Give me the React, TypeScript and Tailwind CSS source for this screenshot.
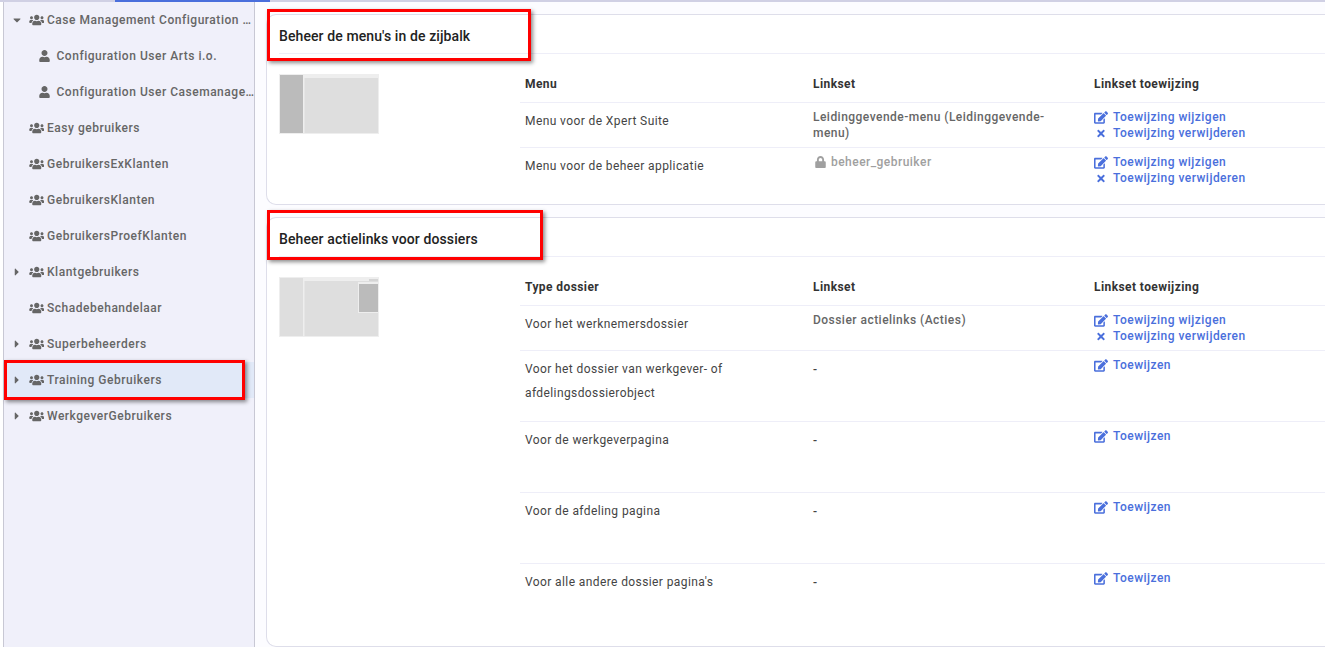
import React from "react";
import { FaUsers, FaUser, FaLock, FaEdit, FaTimes, FaCaretDown, FaCaretRight } from "react-icons/fa";

const font = { fontFamily: "Roboto, 'Liberation Sans', sans-serif" };

function Mark({ className }: { className: string }) {
  return <div className={"absolute border-[3px] border-[#ff0000] shadow-[2px_2px_4px_rgba(0,0,0,0.45)] pointer-events-none z-10 " + className} />;
}

type TreeItem = { label: string; caret?: "down" | "right"; child?: boolean; selected?: boolean };
const tree: TreeItem[] = [
  { label: "Case Management Configuration …", caret: "down" },
  { label: "Configuration User Arts i.o.", child: true },
  { label: "Configuration User Casemanage…", child: true },
  { label: "Easy gebruikers" },
  { label: "GebruikersExKlanten" },
  { label: "GebruikersKlanten" },
  { label: "GebruikersProefKlanten" },
  { label: "Klantgebruikers", caret: "right" },
  { label: "Schadebehandelaar" },
  { label: "Superbeheerders", caret: "right" },
  { label: "Training Gebruikers", caret: "right", selected: true },
  { label: "WerkgeverGebruikers", caret: "right" },
];

function TreeRow({ item }: { item: TreeItem }) {
  return (
    <div className={"relative flex items-center h-9 text-[12px] font-medium tracking-[0.52px] text-[#666] whitespace-nowrap " + (item.selected ? "bg-[#e1e9f8] border-l border-[#4a6fdc]" : "")}>
      {item.selected && <Mark className="left-[-1px] top-[-2px] w-[241px] h-[40px]" />}
      {item.child ? (
        <>
          <span className="w-[35px] shrink-0" />
          <FaUser className="w-[11px] h-[12px] text-[#666] shrink-0" />
          <span className="ml-[6.5px]">{item.label}</span>
        </>
      ) : (
        <>
          <span className={"w-[24.5px] shrink-0 flex justify-center text-[#666] " + (item.selected ? "-ml-px" : "")}>
            {item.caret === "down" && <FaCaretDown className="w-[12px] h-[12px] ml-[1px]" />}
            {item.caret === "right" && <FaCaretRight className="w-[12px] h-[12px] ml-[1px]" />}
          </span>
          <FaUsers className="w-[15.5px] h-[12px] text-[#666] shrink-0" />
          <span className="ml-[3px]">{item.label}</span>
        </>
      )}
    </div>
  );
}

function EditLink({ label }: { label: string }) {
  return (
    <div className="flex items-center h-4 text-[#4a6fdc] font-medium tracking-[0.47px]">
      <FaEdit className="w-[14px] h-[13px] shrink-0" />
      <span className="ml-[5px]">{label}</span>
    </div>
  );
}

function RemoveLink() {
  return (
    <div className="flex items-center h-4 text-[#4a6fdc] font-medium tracking-[0.47px]">
      <span className="w-[14px] flex justify-center shrink-0">
        <FaTimes className="w-[10px] h-[11px]" />
      </span>
      <span className="ml-[5px]">Toewijzing verwijderen</span>
    </div>
  );
}

function Actions({ assigned }: { assigned: boolean }) {
  return assigned ? (
    <div>
      <EditLink label="Toewijzing wijzigen" />
      <RemoveLink />
    </div>
  ) : (
    <EditLink label="Toewijzen" />
  );
}

function Row({ title, linkset, assigned = true, h, last, tall }: { title: React.ReactNode; linkset: React.ReactNode; assigned?: boolean; h: string; last?: boolean; tall?: boolean }) {
  return (
    <div className={"flex text-[12px] " + h + (last ? "" : " border-b border-[#eeeef8]")}>
      <div className={"w-[293px] pl-[5px] pr-2 text-[#444] tracking-[0.4px] " + (tall ? "pt-[6px] leading-6" : "pt-[10px] leading-4")}>{title}</div>
      <div className={"w-[281px] pr-[30px] font-medium tracking-[0.47px] " + (tall ? "pt-[11px] leading-4 text-[#444]" : "pt-[6px] leading-4 text-[#666]")}>{linkset}</div>
      <div className="flex-1 pt-[6px]"><Actions assigned={assigned} /></div>
    </div>
  );
}

function Head({ a }: { a: string }) {
  return (
    <div className="flex h-[38px] items-center text-[12px] font-bold text-[#333] tracking-[0.42px] border-b border-[#eeeef8]">
      <div className="w-[293px] pl-[5px]">{a}</div>
      <div className="w-[281px]">Linkset</div>
      <div>Linkset toewijzing</div>
    </div>
  );
}

function Thumb({ variant }: { variant: "side" | "action" }) {
  return (
    <svg width="100" height="60" viewBox="0 0 100 60" className="shrink-0 block">
      <rect width="100" height="60" fill="#eeeeee" />
      <rect x="1" y="1" width="23" height="58" fill={variant === "side" ? "#bbbbbb" : "#dedede"} />
      <rect x="25.5" y="4" width="73.5" height="55" fill="#dedede" />
      {variant === "action" && (
        <>
          <rect x="90" y="2.5" width="9" height="1" fill="#bbbbbb" />
          <rect x="79" y="5" width="21" height="31" fill="#eeeeee" />
          <rect x="80" y="7" width="19" height="28" fill="#bbbbbb" />
        </>
      )}
    </svg>
  );
}

function Card({ title, mark, thumb, className, children }: { title: string; mark: string; thumb: "side" | "action"; className: string; children: React.ReactNode }) {
  return (
    <section className={"relative shrink-0 bg-white border border-[#dedeea] rounded-tl-[10px] rounded-bl-[10px] border-r-0 " + className}>
      <Mark className={mark} />
      <div className="ml-3 h-[39px] flex items-center border-b border-[#eeeef8]">
        <h2 className="text-[14px] font-medium text-[#222] tracking-[0.1px] pt-[4px]">{title}</h2>
      </div>
      <div className="flex pl-3 pt-[20px]">
        <Thumb variant={thumb} />
        <div className="ml-[141px] flex-1 -mt-[9px]">{children}</div>
      </div>
    </section>
  );
}

export default function App() {
  return (
    <div style={font} className="relative w-[1325px] h-[647px] overflow-hidden bg-white flex flex-col">
      <div className="relative h-[2px] bg-[#d0d0e4] shrink-0">
        <div className="absolute left-[115px] top-0 w-[155px] h-[2px] bg-[#4a6fdc]" />
      </div>
      <div className="flex flex-1 min-h-0">
        <div className="w-[3px] bg-white shrink-0" />
        <aside className="w-[252px] shrink-0 bg-[#f0f0fa] border-l border-r border-[#c8c8d4]">
          {tree.map((t) => (
            <TreeRow key={t.label} item={t} />
          ))}
        </aside>
        <main className="flex-1 min-w-0 bg-[#fcfcff] pl-[11px] pt-[12px] flex flex-col gap-3">
          <Card title="Beheer de menu's in de zijbalk" mark="left-0 top-[-6px] w-[264px] h-[52px]" thumb="side" className="h-[191px] w-[1060px]">
            <Head a="Menu" />
            <Row h="h-[45px]" title="Menu voor de Xpert Suite" linkset="Leidinggevende-menu (Leidinggevende-menu)" />
            <Row
              h="h-[45px]"
              last
              title="Menu voor de beheer applicatie"
              linkset={
                <span className="flex items-center text-[#a0a0a0] font-medium pl-[2px]">
                  <FaLock className="w-[11px] h-[12px] mr-[5px]" />
                  beheer_gebruiker
                </span>
              }
            />
          </Card>
          <Card title="Beheer actielinks voor dossiers" mark="left-0 top-[-8px] w-[276px] h-[50px]" thumb="action" className="h-[430px] w-[1060px]">
            <Head a="Type dossier" />
            <Row h="h-[45px]" title="Voor het werknemersdossier" linkset="Dossier actielinks (Acties)" />
            <Row h="h-[71px]" tall assigned={false} title={<>Voor het dossier van werkgever- of<br />afdelingsdossierobject</>} linkset="-" />
            <Row h="h-[71px]" tall assigned={false} title="Voor de werkgeverpagina" linkset="-" />
            <Row h="h-[71px]" tall assigned={false} title="Voor de afdeling pagina" linkset="-" />
            <Row h="h-[71px]" tall last assigned={false} title="Voor alle andere dossier pagina's" linkset="-" />
          </Card>
        </main>
      </div>
    </div>
  );
}
